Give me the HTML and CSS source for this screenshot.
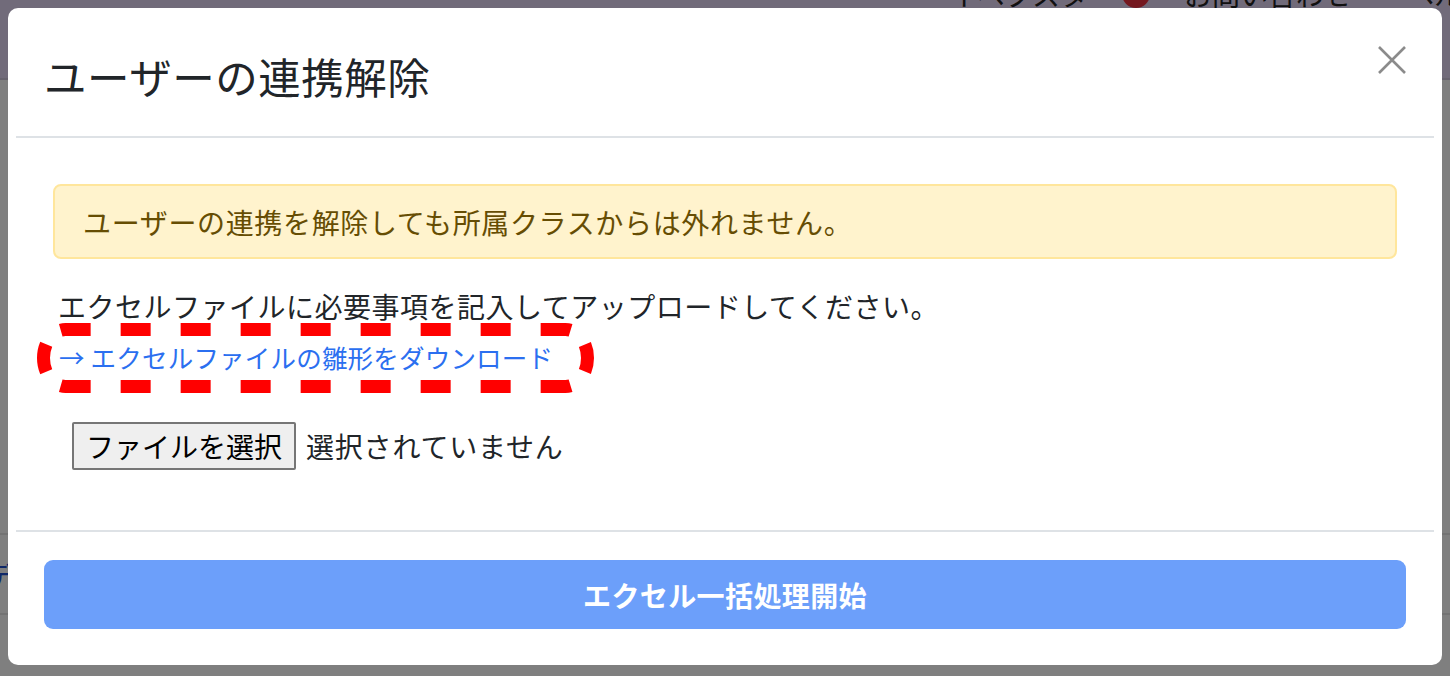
FILE: index.html
```html
<!DOCTYPE html>
<html lang="ja">
<head>
<meta charset="utf-8">
<title>ユーザーの連携解除</title>
<link rel="stylesheet" href="styles.css">
</head>
<body>
<div class="page">
  <header class="page-header">
    <nav class="page-nav">
      <span class="nav-item nav-brand">イベクスタ</span>
      <span class="nav-badge"></span>
      <span class="nav-item nav-contact">お問い合わせ</span>
      <span class="nav-item">ヘルプ</span>
    </nav>
  </header>
  <div class="page-rows">
    <div class="page-row"></div>
    <div class="page-row"><span class="page-link">デ</span></div>
  </div>
</div>
<div class="backdrop"></div>
<div class="modal">
  <div class="modal-header">
    <h5 class="modal-title">ユーザーの連携解除</h5>
    <button class="close" type="button" aria-label="閉じる">
      <svg width="28" height="28" viewBox="0 0 28 28"><path d="M1 1 L27 27 M27 1 L1 27" stroke="#8b8b8b" stroke-width="2.6" fill="none"/></svg>
    </button>
  </div>
  <div class="modal-body">
    <div class="alert">ユーザーの連携を解除しても所属クラスからは外れません。</div>
    <p class="lead-text">エクセルファイルに必要事項を記入してアップロードしてください。</p>
    <a class="template-link" href="#">→ エクセルファイルの雛形をダウンロード</a>
    <div class="file-row">
      <span class="file-btn">ファイルを選択</span>
      <span class="file-name">選択されていません</span>
    </div>
  </div>
  <div class="modal-footer">
    <button class="submit" type="button" disabled>エクセル一括処理開始</button>
  </div>
  <svg class="annotation" width="574" height="86" viewBox="0 0 574 86">
    <path class="dash-half" d="M13.5 42 A22 28.5 0 0 1 35.5 13.5 H535.5 A22 28.5 0 0 1 557.5 42"/>
    <path class="dash-half" d="M13.5 42 A22 28.5 0 0 0 35.5 70.5 H535.5 A22 28.5 0 0 0 557.5 42"/>
  </svg>
</div>
</body>
</html>
```
FILE: styles.css
```css
* { box-sizing: border-box; }
html, body { margin: 0; padding: 0; }
body {
  width: 1450px;
  height: 676px;
  overflow: hidden;
  position: relative;
  font-family: "Noto Sans CJK JP", "Noto Sans", sans-serif;
  background: #ffffff;
  color: #212529;
}
.page { width: 100%; height: 676px; background: #ffffff; overflow: hidden; }
.page-header {
  height: 80px;
  background: #e3d7f5;
  border-bottom: 2px solid #cfc6dc;
  display: flex;
  justify-content: flex-end;
  overflow: hidden;
}
.page-nav {
  display: flex;
  align-items: center;
  height: 40px;
  margin-top: -26px;
  font-size: 28px;
  line-height: 40px;
  color: #222;
  margin-right: -40px;
}
.nav-brand { margin-right: 34px; }
.nav-badge {
  width: 28px; height: 28px; border-radius: 50%;
  background: #e8303f;
  margin-right: 34px;
}
.nav-contact { margin-right: 54px; }
.page-rows { padding-top: 375px; }
.page-row {
  height: 80px;
  border-bottom: 2px solid #e6e6e6;
  font-size: 28px;
  line-height: 80px;
}
.page-link { color: #1f4fd1; margin-left: -14px; }
.backdrop {
  position: absolute;
  inset: 0;
  background: rgba(0, 0, 0, 0.5);
}
.modal {
  position: absolute;
  left: 8px;
  top: 8px;
  width: 1434px;
  height: 657px;
  background: #ffffff;
  border-radius: 10px;
  display: flex;
  flex-direction: column;
}
.modal-header {
  margin: 0 8px;
  padding: 43px 28px 35px 28px;
  border-bottom: 2px solid #dee2e6;
  display: flex;
  justify-content: space-between;
  align-items: flex-start;
}
.modal-title {
  margin: 0;
  font-size: 42.5px;
  line-height: 50px;
  font-weight: 400;
  letter-spacing: 0.5px;
  color: #212529;
}
.close {
  border: 0;
  background: none;
  padding: 0;
  margin-top: -5px;
  width: 28px;
  height: 28px;
  display: block;
}
.close svg { display: block; }
.modal-body {
  margin: 0 8px;
  padding: 46px 37px 60px 37px;
  display: flex;
  flex-direction: column;
  align-items: flex-start;
}
.alert {
  width: 100%;
  height: 75px;
  background: #fff3cd;
  border: 2px solid #ffe69c;
  border-radius: 8px;
  color: #664d03;
  font-size: 28px;
  letter-spacing: 0.65px;
  display: flex;
  align-items: center;
  padding: 0 28px;
}
.lead-text {
  margin: 26px 0 0 5px;
  font-size: 28px;
  line-height: 42px;
  letter-spacing: 0.5px;
  color: #212529;
}
.template-link {
  margin: 11px 0 0 6px;
  font-size: 25.5px;
  line-height: 38px;
  letter-spacing: 0.2px;
  color: #2b6ff0;
  text-decoration: none;
}
.file-row {
  margin: 46px 0 0 19px;
  display: flex;
  align-items: center;
  gap: 10px;
  height: 48px;
}
.file-btn {
  height: 48px;
  padding: 0 12px;
  border: 2px solid #767676;
  border-radius: 2px;
  background: #efefef;
  font-size: 28px;
  line-height: 44px;
  color: #000;
}
.file-name {
  font-size: 28px;
  letter-spacing: 0.8px;
  color: #212529;
}
.modal-footer {
  margin: 0 8px;
  border-top: 2px solid #dee2e6;
  padding: 28px 28px 36px 28px;
}
.submit {
  width: 100%;
  height: 69px;
  border: 0;
  border-radius: 9px;
  background: #6c9ffa;
  color: #ffffff;
  font-family: "Noto Sans CJK JP", "Noto Sans", sans-serif;
  font-size: 28px;
  font-weight: 600;
  letter-spacing: 0.4px;
}
.annotation {
  position: absolute;
  left: 22px;
  top: 308px;
}
.dash-half {
  fill: none;
  stroke: #ff0000;
  stroke-width: 13;
  stroke-dasharray: 14 20.85 30 30 30 30 30 30 30 30 30 30 30 30 30 30 30 30 30 20.85 14 200;
}
```
